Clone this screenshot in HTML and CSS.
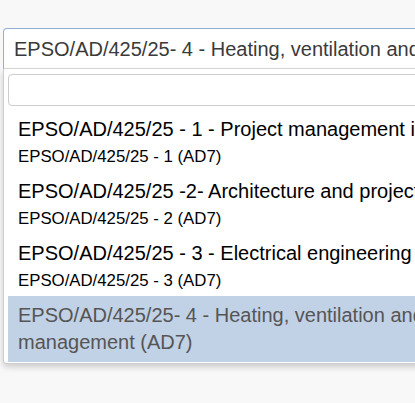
FILE: index.html
```html
<!DOCTYPE html>
<html>
<head>
<meta charset="utf-8">
<link rel="stylesheet" href="styles.css">
</head>
<body>
<div class="page">
  <div class="select">
    <div class="selection">EPSO/AD/425/25- 4 - Heating, ventilation and air-conditioning engineering and energy management (AD7)</div>
    <div class="dropdown">
      <div class="search"><input class="search-input" type="text"></div>
      <ul class="results">
        <li class="option">
          <div class="main">EPSO/AD/425/25 - 1 - Project management in construction (AD7)</div>
          <div class="sub">EPSO/AD/425/25 - 1 (AD7)</div>
        </li>
        <li class="option">
          <div class="main">EPSO/AD/425/25 -2- Architecture and project design (AD7)</div>
          <div class="sub">EPSO/AD/425/25 - 2 (AD7)</div>
        </li>
        <li class="option">
          <div class="main">EPSO/AD/425/25 - 3 - Electrical engineering and management (AD7)</div>
          <div class="sub">EPSO/AD/425/25 - 3 (AD7)</div>
        </li>
        <li class="option highlighted">
          <div class="main wrap">EPSO/AD/425/25- 4 - Heating, ventilation and air-con<br>management (AD7)</div>
        </li>
      </ul>
    </div>
  </div>
</div>
</body>
</html>
```
FILE: styles.css
```css
html, body {
  margin: 0;
  padding: 0;
  background: #f8f8f8;
  overflow: hidden;
  height: 403px;
}
.page {
  padding: 28px 0 0 3px;
  font-family: "Liberation Sans", Arial, sans-serif;
}
.select {
  width: 560px;
}
.selection {
  box-sizing: border-box;
  height: 41px;
  border: 1px solid #8fb0d2;
  border-bottom-color: #d9d9d9;
  border-radius: 4px 4px 0 0;
  background: #fff;
  color: #3a3a3a;
  font-size: 20px;
  line-height: 41px;
  padding-left: 10px;
  white-space: nowrap;
  overflow: hidden;
}
.dropdown {
  background: #fff;
  border: 1px solid #cfcfcf;
  border-top: none;
  border-radius: 0 0 4px 4px;
  box-shadow: 0 3px 6px rgba(0,0,0,0.18);
  padding: 0 0 1px 0;
}
.search {
  padding: 5px 4px 4px 4px;
}
.search-input {
  display: block;
  box-sizing: border-box;
  width: 100%;
  height: 32px;
  margin: 0;
  border: 1px solid #ccc;
  border-radius: 4px;
  background: #fff;
  outline: none;
}
.results {
  list-style: none;
  margin: 0 0 0 4px;
  padding: 0;
}
.option {
  padding: 6px 10px 4px 10px;
  color: #000;
  white-space: nowrap;
}
.main {
  font-size: 20px;
  line-height: 27px;
}
.sub {
  font-size: 16.8px;
  line-height: 22px;
  margin-top: 3px;
}
.highlighted {
  background: #c1d1e6;
  color: #555;
  padding-bottom: 6px;
}
```
